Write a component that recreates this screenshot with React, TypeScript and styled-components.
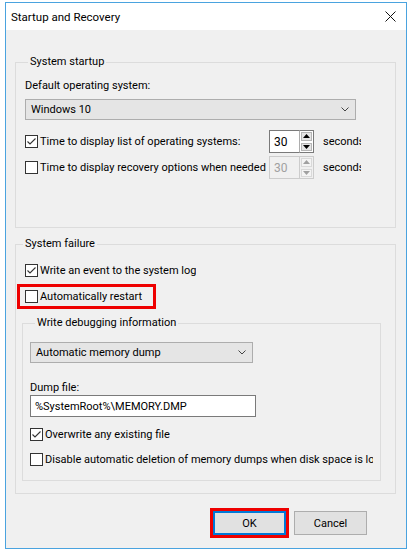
import React from "react";
import styled, { createGlobalStyle } from "styled-components";

const Global = createGlobalStyle`
  html, body { margin: 0; padding: 0; background: #ffffff; }
  body {
    font-family: "Segoe UI", Roboto, "Noto Sans", sans-serif;
    font-size: 11px;
    color: #000;
  }
  * { box-sizing: border-box; }
`;

const Window = styled.div`
  margin: 2px 0 0 5px;
  width: 402px;
  height: 547px;
  border: 1px solid #4aa3df;
  background: #f0f0f0;
  display: flex;
  flex-direction: column;
`;

const TitleBar = styled.div`
  height: 27px;
  background: #ffffff;
  display: flex;
  align-items: center;
  justify-content: space-between;
  padding: 0 10px 0 5px;
  line-height: 16px;
  font-size: 11.5px;
`;

const Body = styled.div`
  flex: 1;
  display: flex;
  flex-direction: column;
  padding: 24px 10px 0 9px;
`;

const Group = styled.fieldset<{ $pl: number; $pt: number; $pb: number; $pr?: number; $ml?: number; $mt?: number; $w?: number }>`
  margin: ${(p) => p.$mt ?? 0}px 0 0 ${(p) => p.$ml ?? 0}px;
  padding: ${(p) => p.$pt}px ${(p) => p.$pr ?? 0}px ${(p) => p.$pb}px ${(p) => p.$pl}px;
  border: 1px solid #dcdcdc;
  min-width: 0;
  ${(p) => (p.$w ? `width: ${p.$w}px;` : "")}
  display: flex;
  flex-direction: column;
  align-items: flex-start;
`;

const Legend = styled.legend<{ $ml: number }>`
  margin-left: ${(p) => p.$ml}px;
  padding: 0 2px;
  line-height: 16px;
`;

const Label = styled.div<{ $lh?: number; $mt?: number }>`
  line-height: ${(p) => p.$lh ?? 16}px;
  margin-top: ${(p) => p.$mt ?? 0}px;
  white-space: nowrap;
`;

const Combo = styled.div<{ $w: number; $mt?: number }>`
  width: ${(p) => p.$w}px;
  height: 21px;
  margin-top: ${(p) => p.$mt ?? 0}px;
  background: #e5e5e5;
  border: 1px solid #adadad;
  display: flex;
  align-items: center;
  justify-content: space-between;
  padding: 0 6px 0 5px;
`;

const TextBox = styled.div<{ $w: number }>`
  width: ${(p) => p.$w}px;
  height: 22px;
  background: #fff;
  border: 1px solid #7a7a7a;
  display: flex;
  align-items: center;
  padding-left: 4px;
  white-space: nowrap;
`;

const SpinRow = styled.div<{ $mt: number }>`
  display: flex;
  align-items: center;
  height: 23px;
  margin-top: ${(p) => p.$mt}px;
`;

const CheckRow = styled.label<{ $w?: number; $pl?: number; $mt?: number; $hl?: boolean }>`
  display: flex;
  align-items: center;
  gap: 2px;
  height: 19px;
  ${(p) => (p.$w ? `width: ${p.$w}px;` : "")}
  padding-left: ${(p) => p.$pl ?? 0}px;
  margin-top: ${(p) => p.$mt ?? 0}px;
  white-space: nowrap;
  overflow: hidden;
  flex-shrink: 0;
  ${(p) => (p.$hl ? "outline: 3px solid #ee0000; outline-offset: 0;" : "")}
`;

const Box = styled.span`
  width: 13px;
  height: 13px;
  flex: 0 0 13px;
  border: 1px solid #333;
  background: #fff;
  display: flex;
`;

const Spinner = styled.div`
  display: flex;
  width: 45px;
  height: 23px;
  flex-shrink: 0;
`;

const SpinText = styled.div<{ $disabled?: boolean }>`
  width: 30px;
  height: 23px;
  border: 1px solid ${(p) => (p.$disabled ? "#cccccc" : "#7a7a7a")};
  border-right: none;
  background: ${(p) => (p.$disabled ? "#f0f0f0" : "#fff")};
  color: ${(p) => (p.$disabled ? "#a0a0a0" : "#000")};
  padding-left: 4px;
  display: flex;
  align-items: center;
  font-size: 12px;
`;

const SpinArrows = styled.div<{ $disabled?: boolean }>`
  width: 15px;
  height: 23px;
  border: 1px solid ${(p) => (p.$disabled ? "#cccccc" : "#7a7a7a")};
  border-left: 1px solid ${(p) => (p.$disabled ? "#cccccc" : "#adadad")};
  display: flex;
  flex-direction: column;
  background: ${(p) => (p.$disabled ? "#f0f0f0" : "#fff")};
`;

const SpinBtn = styled.div<{ $disabled?: boolean }>`
  flex: 1;
  margin: 1px;
  background: ${(p) => (p.$disabled ? "#f4f4f4" : "#e5e5e5")};
  border: 1px solid ${(p) => (p.$disabled ? "#d9d9d9" : "#b5b5b5")};
  display: flex;
  align-items: center;
  justify-content: center;
`;

const Seconds = styled.div`
  margin-left: 9px;
  width: 38px;
  overflow: hidden;
  white-space: nowrap;
`;

const Buttons = styled.div`
  display: flex;
  justify-content: flex-end;
  gap: 8px;
  margin-top: 17px;
  padding-right: 29px;
`;

const Button = styled.div<{ $def?: boolean }>`
  width: 73px;
  height: 24px;
  background: #e1e1e1;
  border: ${(p) => (p.$def ? "2px solid #0078d7" : "1px solid #adadad")};
  display: flex;
  align-items: center;
  justify-content: center;
  ${(p) => (p.$def ? "outline: 3px solid #ee0000;" : "")}
`;

const Chevron = () => (
  <svg width="8" height="5" viewBox="0 0 8 5">
    <polyline points="0.5,0.5 4,4 7.5,0.5" fill="none" stroke="#444" strokeWidth="1" />
  </svg>
);

const Check = ({ on }: { on?: boolean }) => (
  <Box>
    {on && (
      <svg width="11" height="11" viewBox="0 0 11 11">
        <polyline points="1.5,5.5 4,8 9.5,2.5" fill="none" stroke="#333" strokeWidth="1.1" />
      </svg>
    )}
  </Box>
);

const Tri = ({ up, color }: { up?: boolean; color: string }) => (
  <svg width="7" height="4" viewBox="0 0 7 4">
    <polygon points={up ? "0,4 3.5,0 7,4" : "0,0 7,0 3.5,4"} fill={color} />
  </svg>
);

const Spin = ({ value, disabled }: { value: string; disabled?: boolean }) => (
  <Spinner>
    <SpinText $disabled={disabled}>{value}</SpinText>
    <SpinArrows $disabled={disabled}>
      <SpinBtn $disabled={disabled}>
        <Tri up color={disabled ? "#a0a0a0" : "#000"} />
      </SpinBtn>
      <SpinBtn $disabled={disabled}>
        <Tri color={disabled ? "#a0a0a0" : "#000"} />
      </SpinBtn>
    </SpinArrows>
  </Spinner>
);

export default function App() {
  return (
    <>
      <Global />
      <Window>
        <TitleBar>
          <span>Startup and Recovery</span>
          <svg width="11" height="11" viewBox="0 0 11 11">
            <path d="M0.5 0.5 L10.5 10.5 M10.5 0.5 L0.5 10.5" stroke="#111" strokeWidth="1" />
          </svg>
        </TitleBar>
        <Body>
          <Group $pl={9} $pt={8} $pb={48}>
            <Legend $ml={3}>System startup</Legend>
            <Label>Default operating system:</Label>
            <Combo $w={331} $mt={5}>
              <span>Windows 10</span>
              <Chevron />
            </Combo>
            <SpinRow $mt={10}>
              <CheckRow $w={244}>
                <Check on />
                <span>Time to display list of operating systems:</span>
              </CheckRow>
              <Spin value="30" />
              <Seconds>seconds</Seconds>
            </SpinRow>
            <SpinRow $mt={3}>
              <CheckRow $w={244}>
                <Check />
                <span>Time to display recovery options when needed</span>
              </CheckRow>
              <Spin value="30" disabled />
              <Seconds>seconds</Seconds>
            </SpinRow>
          </Group>
          <Group $pl={4} $pt={9} $pb={12} $mt={8}>
            <Legend $ml={3}>System failure</Legend>
            <CheckRow $pl={5}>
              <Check on />
              <span>Write an event to the system log</span>
            </CheckRow>
            <CheckRow $pl={5} $w={133} $mt={7} $hl>
              <Check />
              <span>Automatically restart</span>
            </CheckRow>
            <Group $pl={7} $pr={7} $pt={11} $pb={11} $ml={2} $mt={9} $w={359}>
              <Legend $ml={5}>Write debugging information</Legend>
              <Combo $w={223}>
                <span>Automatic memory dump</span>
                <Chevron />
              </Combo>
              <Label $lh={15} $mt={17}>Dump file:</Label>
              <TextBox $w={226}>%SystemRoot%\MEMORY.DMP</TextBox>
              <CheckRow $mt={8}>
                <Check on />
                <span>Overwrite any existing file</span>
              </CheckRow>
              <CheckRow $mt={6} $w={343}>
                <Check />
                <span>Disable automatic deletion of memory dumps when disk space is low</span>
              </CheckRow>
            </Group>
          </Group>
          <Buttons>
            <Button $def>OK</Button>
            <Button>Cancel</Button>
          </Buttons>
        </Body>
      </Window>
    </>
  );
}
